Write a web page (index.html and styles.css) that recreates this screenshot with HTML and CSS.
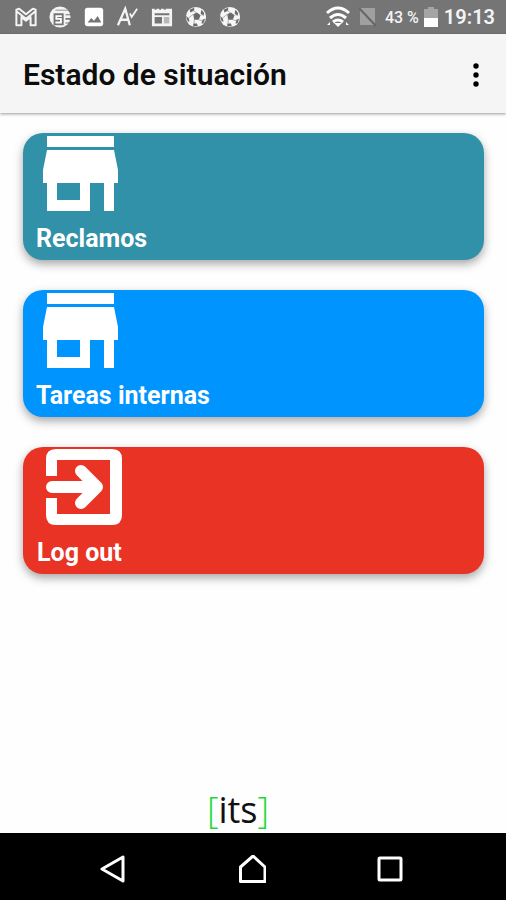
FILE: index.html
```html
<!DOCTYPE html>
<html lang="es">
<head>
  <meta charset="UTF-8">
  <meta name="viewport" content="width=device-width, initial-scale=1">
  <title>Estado de situación</title>
  <link rel="stylesheet" href="styles.css">
</head>
<body>
  <!-- shared icons -->
  <svg class="sprite" aria-hidden="true">
    <symbol id="store" viewBox="0 0 76 76">
      <path fill-rule="evenodd" d="M4 1h67v11H4zM4 15h67l4 20v13h-4v28H61V48H47v28H4V48H0V35zM14 48v17h23V48z"/>
    </symbol>
    <symbol id="ball" viewBox="0 0 24 24">
      <circle cx="12" cy="12" r="11" fill="#f6f6f6"/>
      <path fill="#6a6a6a" d="M9 9l4-2 4 3-2 5-5 0zM5 4l5-2 0 3-4 2zM18 4l3 4-1 3-3-3zM1 11l3 2 1 4-2 0zM9 19l4 0 1 3-5 0zM19 15l3-1-2 5-2 0z"/>
      <path stroke="#a8a8a8" d="M9 5l3 2M17 10l2-1M15 15l4 1M10 15l0 4M9 9l-5 4" fill="none"/>
    </symbol>
  </svg>

  <div class="status-bar">
    <div class="notifications">
      <svg viewBox="0 0 24 24" fill="none" stroke="#f4f4f4" stroke-width="2.200" stroke-linejoin="round"><path d="M1.500 4l3-1 7.500 6 7.500-6 3 1v17H17v-9l-5 4-5-4v9H1.500zM2 6l10 8 10-8"/></svg>
      <svg viewBox="0 0 24 24"><circle cx="12" cy="12" r="11.500" fill="#f4f4f4"/><path fill="#757575" d="M7 4h17v1H7zM5 8h11v13H5zM18 9h6v1h-6zM18 13h6v2h-6zM18 18h6v1h-6z"/><path d="M14 11H8v3h5v4H7" fill="none" stroke="#fff" stroke-width="2"/></svg>
      <svg viewBox="0 0 24 24"><rect x="2" y="2" width="20" height="20" rx="3" fill="#fff"/><path fill="#757575" d="M5 18l4-5 3 3 4-5 4 7z"/></svg>
      <svg viewBox="0 0 24 24" fill="none" stroke="#f4f4f4" stroke-width="2.500"><path d="M1 21L9 3l5 18M4 15h9"/><path stroke-width="2" d="M14 8l2 4 6-9"/></svg>
      <svg viewBox="0 0 24 24"><path fill="#f4f4f4" d="M1 3h3v1h2V3h3v1h2V3h3v1h2V3h7v19H1z"/><path fill="#757575" d="M4 8h16v2H4zM4 12h8v7H4z"/><path fill="#b8b8b8" d="M14 12h6v7h-6z"/></svg>
      <svg><use href="#ball"/></svg>
      <svg><use href="#ball"/></svg>
    </div>
    <div class="system">
      <svg class="wifi" viewBox="0 0 24 24" fill="none" stroke="#fff" stroke-width="3"><path d="M1 8q11-10 22 0M4 13q8-7 16 0M7 17q5-4 10 0"/><path fill="#fff" stroke="none" d="M8 18h8l-4 4zM1 20l3-3v3zM20 17l3 3h-3z"/></svg>
      <svg class="no-sim" viewBox="0 0 18 20"><path fill="#a0a0a0" d="M1 1h15v17H1z"/><path stroke="#666" stroke-width="2" d="M0 1l17 18"/></svg>
      <span class="percent">43 %</span>
      <svg class="battery" viewBox="0 0 14 20"><path fill="#a5a5a5" d="M4 0h6v2h4v9H0V2h4z"/><path fill="#fff" d="M0 11h14v9H0z"/></svg>
      <span class="time">19:13</span>
    </div>
  </div>

  <header class="header">
    <h1>Estado de situación</h1>
    <button class="menu-btn" type="button" aria-label="Más opciones">
      <svg viewBox="0 0 8 24"><circle cx="4" cy="3" r="2.700"/><circle cx="4" cy="12" r="2.700"/><circle cx="4" cy="21" r="2.700"/></svg>
    </button>
  </header>

  <main>
    <button class="card reclamos" type="button">
      <svg><use href="#store"/></svg>
      <span>Reclamos</span>
    </button>
    <button class="card tareas" type="button">
      <svg><use href="#store"/></svg>
      <span>Tareas internas</span>
    </button>
    <button class="card logout" type="button">
      <svg viewBox="0 0 76 76">
        <path d="M0 27V10Q0 0 10 0H66Q76 0 76 10V66Q76 76 66 76H10Q0 76 0 66V49H11V65H64V11H11V27z"/>
        <path d="M6 38H50M35 22L51 38L35 54" fill="none" stroke="#fff" stroke-width="12" stroke-linecap="round" stroke-linejoin="round"/>
      </svg>
      <span>Log out</span>
    </button>
  </main>

  <footer class="brand"><span class="bracket">[</span>its<span class="bracket">]</span></footer>

  <nav class="nav-bar">
    <button type="button" aria-label="Atrás"><svg viewBox="0 0 28 28"><path d="M3 14L24 2V26z"/></svg></button>
    <button type="button" aria-label="Inicio"><svg viewBox="0 0 28 28"><path d="M2.500 26.500V12L15 1L27 12V26.500z"/></svg></button>
    <button type="button" aria-label="Recientes"><svg viewBox="0 0 28 28"><rect x="2" y="3" width="22" height="22" rx="1"/></svg></button>
  </nav>
</body>
</html>
```
FILE: styles.css
```css
* {
  margin: 0;
  padding: 0;
  box-sizing: border-box;
}
body {
  min-height: 100vh;
  display: flex;
  flex-direction: column;
  background: #fefefe;
  font-family: Roboto, sans-serif;
}
button {
  border: none;
  background: none;
  font-family: inherit;
  cursor: pointer;
}
svg {
  display: block;
  flex-shrink: 0;
}
.sprite {
  position: absolute;
  width: 0;
  height: 0;
}

.status-bar {
  height: 34px;
  padding: 0 11px 0 14px;
  display: flex;
  align-items: center;
  justify-content: space-between;
  background: #757575;
  color: #f4f4f4;
}
.notifications {
  display: flex;
  gap: 10px;
}
.notifications svg {
  width: 24px;
  height: 22px;
}
.system {
  display: flex;
  align-items: center;
}
.wifi {
  width: 24px;
  height: 24px;
  margin-right: 9px;
}
.no-sim {
  width: 18px;
  height: 20px;
  margin-right: 8px;
}
.battery {
  width: 14px;
  height: 20px;
  margin: 0 6px 0 5px;
}
.percent {
  font-size: 16px;
  font-weight: 500;
}
.time {
  font-size: 20px;
  font-weight: 600;
}

.header {
  height: 79px;
  padding: 2px 12px 0 23px;
  display: flex;
  align-items: center;
  justify-content: space-between;
  background: #f5f5f5;
  box-shadow: 0 1px 3px rgba(0, 0, 0, 0.4);
}
.header h1 {
  font-size: 30px;
  line-height: 36px;
  font-weight: 600;
  color: #0c0c0c;
}
.menu-btn {
  width: 36px;
  height: 48px;
  display: flex;
  align-items: center;
  justify-content: center;
}
.menu-btn svg {
  width: 8px;
  height: 24px;
}

main {
  flex: 1;
  padding: 20px 22px 20px 23px;
  display: flex;
  flex-direction: column;
  gap: 30px;
}
.card {
  height: 127px;
  padding: 2px 13px 6px;
  display: flex;
  flex-direction: column;
  align-items: flex-start;
  justify-content: space-between;
  border-radius: 20px;
  box-shadow: 0 4px 10px rgba(0, 0, 0, 0.35);
  color: #fff;
  font-size: 25px;
  line-height: 30px;
  font-weight: 700;
}
.card svg {
  width: 76px;
  height: 76px;
  margin-left: 7px;
  fill: #fff;
}
.reclamos {
  background: #3191a8;
}
.tareas {
  background: #0094ff;
}
.logout {
  padding-left: 14px;
  background: #e93425;
}
.logout svg {
  margin-left: 9px;
}

.brand {
  height: 48px;
  padding-right: 30px;
  display: flex;
  justify-content: center;
  align-items: center;
  font-family: "Open Sans", sans-serif;
  font-size: 36px;
  color: #111;
}
.bracket {
  color: #18d936;
  font-weight: 300;
}

.nav-bar {
  height: 67px;
  padding: 4px 91px 0 89px;
  display: flex;
  align-items: center;
  justify-content: space-between;
  background: #000;
}
.nav-bar button {
  width: 48px;
  height: 48px;
  display: flex;
  align-items: center;
  justify-content: center;
}
.nav-bar svg {
  width: 28px;
  height: 28px;
  fill: none;
  stroke: #fff;
  stroke-width: 3;
  stroke-linejoin: round;
}
```
